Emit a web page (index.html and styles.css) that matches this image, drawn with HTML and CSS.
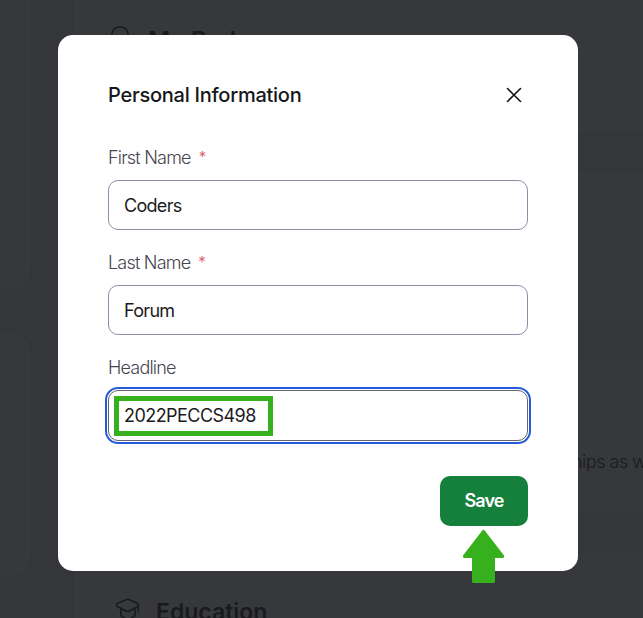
FILE: index.html
```html
<!DOCTYPE html>
<html lang="en">
<head>
<meta charset="utf-8">
<title>Personal Information</title>
<link rel="stylesheet" href="styles.css">
</head>
<body>
<div class="page">
  <aside class="side">
    <div class="card side-top"></div>
    <div class="card side-bottom"></div>
  </aside>
  <main class="main">
    <section class="card badges">
      <svg class="badge-icon" viewBox="0 0 24 30" width="24" height="30"><circle cx="12" cy="10" r="8.3"/><path d="M6 16v12l6-4 6 4V16"/></svg>
      <h2 class="badges-title">My Badges</h2>
    </section>
    <section class="card middle"></section>
    <section class="card about"><p class="about-text">hips as w</p></section>
    <section class="card education">
      <svg class="edu-icon" viewBox="0 0 24 24" width="24" height="24"><path d="M11 1.4 1.8 5.2Q.2 6 .7 7.2L1.2 8.4 10 13Q11.6 14 13.2 13L22 8.6V6.4Q22 5.6 21 5.2L13 1.5Q12 1 11 1.4ZM4.8 10.5V17Q8 21 12 21T19 17V10.5M22.3 7V14.5"/></svg>
      <h2 class="edu-title">Education</h2>
    </section>
  </main>
</div>
<div class="overlay">
  <form class="modal">
    <header class="head">
      <h1 class="title">Personal Information</h1>
      <svg class="close" viewBox="0 0 16 16" width="16" height="16"><path d="m1.5 1.5 13 13m0-13-13 13"/></svg>
    </header>
    <div class="field">
      <div class="label"><span>First Name</span><span class="star">*</span></div>
      <div class="input"><span class="value">Coders</span></div>
    </div>
    <div class="field">
      <div class="label"><span>Last Name</span><span class="star">*</span></div>
      <div class="input"><span class="value">Forum</span></div>
    </div>
    <div class="field">
      <div class="label"><span>Headline</span></div>
      <div class="input focused"><span class="code">2022PECCS498</span><i class="highlight"></i></div>
    </div>
    <div class="actions">
      <button class="save" type="button"><span>Save</span></button>
      <svg class="arrow" viewBox="0 0 42 54" width="42" height="54"><path d="M19.5 1.2Q20.5 .2 21.5 1.2L41 26.5Q41.5 29 39.5 29H32V52.5Q32 54 30.5 54H10.5Q9 54 9 52.5V29H1.5Q-.5 29 0 26.5Z"/></svg>
    </div>
  </form>
</div>
</body>
</html>
```
FILE: styles.css
```css
* { box-sizing: border-box; }
body {
  margin: 0;
  height: 618px;
  overflow: hidden;
  background: #353639;
  color: #191a1e;
  font-family: Inter, "Liberation Sans", sans-serif;
}
h1, h2, p { margin: 0; }
svg { fill: none; stroke: currentColor; flex: none; }
span, h1, h2, p { white-space: nowrap; }

.page { display: flex; gap: 41px; height: 618px; overflow: hidden; }
.card { background: #37383b; border: 1px solid #343538; }
.side { flex: none; width: 32px; display: flex; flex-direction: column; gap: 41px; }
.side .card { border-left: 0; }
.side-top { height: 291px; border-top: 0; border-radius: 0 0 20px 0; }
.side-bottom { height: 246px; border-radius: 0 20px 20px 0; }
.main { flex: none; width: 600px; display: flex; flex-direction: column; gap: 38px; }
.badges { height: 133px; flex: none; border-top: 0; padding: 26px 0 0 34px; display: flex; gap: 16px; }
.badge-icon { stroke-width: 1.5; margin-top: -1px; }
.badges-title { font-size: 24px; line-height: 30px; font-weight: 600; letter-spacing: .2px; }
.middle { height: 149px; flex: none; }
.about { height: 156px; flex: none; padding: 89px 0 0 498px; overflow: hidden; }
.about-text { font-size: 18px; line-height: 27px; font-weight: 300; letter-spacing: -.5px; }
.education { height: 150px; flex: none; display: flex; gap: 16px; padding: 45px 0 0 42px; }
.edu-icon { stroke-width: 1.5; }
.edu-title { font-size: 23px; line-height: 28px; font-weight: 600; letter-spacing: 0; }

.overlay { position: absolute; inset: 0; padding: 35px 65px 47px 58px; }
.modal { height: 536px; padding: 45px 50px; border-radius: 15px; background: #fff; }
.head { height: 30px; margin-bottom: 35px; display: flex; justify-content: space-between; align-items: center; color: #15171b; }
.title { font-size: 20px; line-height: 30px; font-weight: 500; letter-spacing: -.25px; }
.close { margin: -1px 6.5px 0 0; stroke-width: 1.6; stroke-linecap: round; }
.field { height: 105px; }
.label { height: 35px; display: flex; gap: 8px; font-size: 18px; line-height: 26px; font-weight: 300; letter-spacing: -.8px; color: #454650; }
.star { color: #dc6971; font-size: 15px; line-height: 24px; font-weight: 400; }
.input { position: relative; height: 50px; border: 1px solid #908da8; border-radius: 10px; padding: 0 15px; font-size: 18px; line-height: 50px; color: #1b1b21; }
.focused { height: 51px; border-color: #65656d; outline: 2px solid #245bdb; outline-offset: 1px; }
.highlight { position: absolute; left: 5px; top: 5px; width: 159px; height: 40px; border: 5px solid #36b01c; }
.value { letter-spacing: -.7px; }
.code { letter-spacing: -.55px; }
.actions { position: relative; display: flex; justify-content: flex-end; margin-top: 16px; }
.save { width: 88px; height: 50px; border: 0; border-radius: 10px; background: #15803c; color: #fff; font: 600 18px/50px Inter, sans-serif; letter-spacing: -.95px; padding: 0; }
.arrow { position: absolute; right: 23px; top: 53px; fill: #36b01c; stroke: none; }
```
